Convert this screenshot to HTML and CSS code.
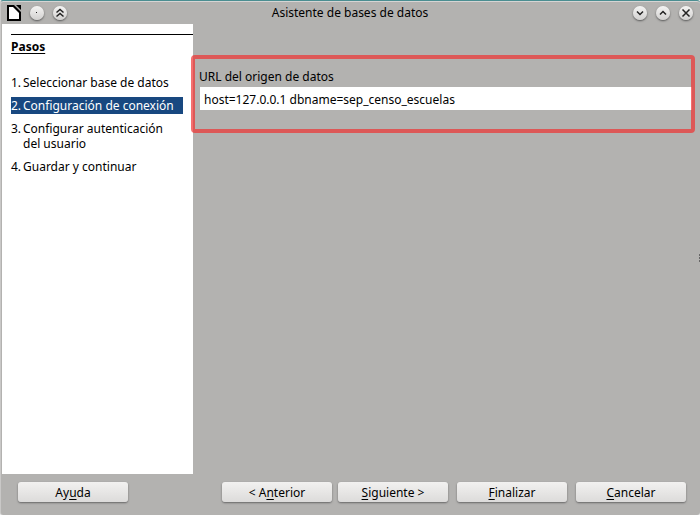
FILE: index.html
```html
<!DOCTYPE html>
<html lang="es">
<head>
<meta charset="utf-8">
<title>Asistente de bases de datos</title>
<link rel="stylesheet" href="styles.css">
</head>
<body>
<div class="window">
  <header class="titlebar">
    <div class="controls">
      <svg class="app-icon" width="14" height="16" viewBox="0 0 14 16" aria-hidden="true"><path d="M0 0H7L14 7V16H0Z" fill="#000"/><path d="M9 0H14V5Z" fill="#000"/><path d="M2 2H6L12 8V14H2Z" fill="#fff"/></svg>
      <button class="round" type="button" aria-label="En todos los escritorios"><svg width="14" height="14" viewBox="0 0 14 14"><path d="M6 6h1v1h-1z" fill="#222"/></svg></button>
      <button class="round" type="button" aria-label="Recoger"><svg width="14" height="14" viewBox="0 0 14 14"><path d="M3.5 6.5L7 3.5L10.5 6.5M3.5 10.5L7 7.5L10.5 10.5" class="glyph"/></svg></button>
    </div>
    <h1 class="title">Asistente de bases de datos</h1>
    <div class="controls controls-end">
      <button class="round" type="button" aria-label="Minimizar"><svg width="14" height="14" viewBox="0 0 14 14"><path d="M4 5.5L7 8.5L10 5.5" class="glyph"/></svg></button>
      <button class="round" type="button" aria-label="Maximizar"><svg width="14" height="14" viewBox="0 0 14 14"><path d="M4 8.5L7 5.5L10 8.5" class="glyph"/></svg></button>
      <button class="round" type="button" aria-label="Cerrar"><svg width="14" height="14" viewBox="0 0 14 14"><path d="M3.5 3.5L10.5 10.5M10.5 3.5L3.5 10.5" class="glyph"/></svg></button>
    </div>
  </header>
  <main class="content">
    <nav class="steps">
      <h2 class="steps-title">Pasos</h2>
      <ol class="step-list">
        <li class="step"><span>1.</span><span>Seleccionar base de datos</span></li>
        <li class="step current" aria-current="step"><span>2.</span><span>Configuración de conexión</span></li>
        <li class="step"><span>3.</span><span>Configurar autenticación del usuario</span></li>
        <li class="step"><span>4.</span><span>Guardar y continuar</span></li>
      </ol>
    </nav>
    <section class="page">
      <div class="source">
        <label for="url">URL del origen de datos</label>
        <input id="url" type="text" value="host=127.0.0.1 dbname=sep_censo_escuelas">
      </div>
      <div class="grip"></div>
    </section>
  </main>
  <footer class="actions">
    <button class="btn help" type="button">Ay<u>u</u>da</button>
    <div class="pair">
      <button class="btn" type="button">&lt; A<u>n</u>terior</button>
      <button class="btn" type="button"><u>S</u>iguiente &gt;</button>
    </div>
    <button class="btn" type="button"><u>F</u>inalizar</button>
    <button class="btn" type="button"><u>C</u>ancelar</button>
  </footer>
</div>
</body>
</html>
```
FILE: styles.css
```css
* {
  box-sizing: border-box;
}

body {
  margin: 0;
  background: #e8e8e8;
  color: #000;
  font: 12px/15px "Noto Sans", "Open Sans", sans-serif;
}

.window {
  display: flex;
  flex-direction: column;
  min-height: 100vh;
  background: #b3b2b0;
  border-top: 1px solid #4b8e91;
  border-left: 1px solid #c9c8c7;
  border-radius: 3px;
  box-shadow: inset 0 1px #d6d5d4;
}

.titlebar {
  display: grid;
  grid-template-columns: 1fr auto 1fr;
  align-items: center;
  height: 23px;
  padding: 0 7px 0 6px;
}

.title {
  margin: 0;
  font-size: 12px;
  font-weight: 400;
}

.controls {
  display: flex;
  align-items: center;
  gap: 9px;
}

.controls-end {
  justify-content: flex-end;
}

.round {
  width: 14px;
  height: 14px;
  padding: 0;
  border: 0;
  border-radius: 50%;
  background: linear-gradient(#f4f4f3, #d2d1d0);
  box-shadow: 0 1px 2px #555;
}

.round svg {
  display: block;
}

.glyph {
  fill: none;
  stroke: #222;
  stroke-width: 1.5;
}

.content {
  display: flex;
  flex: 1;
  padding-left: 1px;
}

.steps {
  flex: 0 0 191px;
  padding: 10px 0 0 9px;
  background: #fff;
}

.steps-title {
  margin: 0 0 19px;
  padding-top: 4px;
  border-top: 1px solid #000;
  font-size: 12px;
  font-weight: 700;
  line-height: 16px;
  text-decoration: underline;
  text-underline-offset: 2px;
}

.step-list {
  display: grid;
  gap: 6px;
  margin: 0 10px 0 0;
  padding: 0;
  list-style: none;
}

.step {
  display: grid;
  grid-template-columns: 12px 1fr;
  padding: 1px 0;
}

.step.current {
  background: #184880;
  color: #fff;
}

.page {
  position: relative;
  flex: 1;
  padding-top: 31px;
}

.source {
  position: relative;
  display: grid;
  gap: 3px;
  margin: 0 5px 0 -2px;
  padding: 14px 3px 23px 9px;
}

/* Translucent highlight drawn over the field group */
.source::after {
  content: "";
  position: absolute;
  inset: 0;
  border: 4px solid rgba(240, 50, 50, 0.7);
  border-radius: 4px;
  pointer-events: none;
}

.source label {
  margin-left: -1px;
}

.source input {
  width: 100%;
  height: 23px;
  margin: 0;
  padding: 1px 4px 0;
  border: 0;
  background: #fff;
  color: #000;
  font: inherit;
}

.grip {
  position: absolute;
  top: 230px;
  right: 0;
  width: 1px;
  height: 8px;
  background: repeating-linear-gradient(#666 0 2px, #b3b2b0 2px 3px);
}

.actions {
  display: flex;
  gap: 9px;
  padding: 8px 14px 13px 17px;
}

.pair {
  display: flex;
  gap: 6px;
}

.help {
  margin-right: auto;
}

.btn {
  width: 110px;
  height: 20px;
  padding: 0;
  border: 0;
  border-radius: 3px;
  background: linear-gradient(#f2f1f0, #dcdbda);
  box-shadow: 0 1px 2px #666;
  color: #000;
  font: inherit;
}

.btn u {
  text-underline-offset: 2px;
}
```
